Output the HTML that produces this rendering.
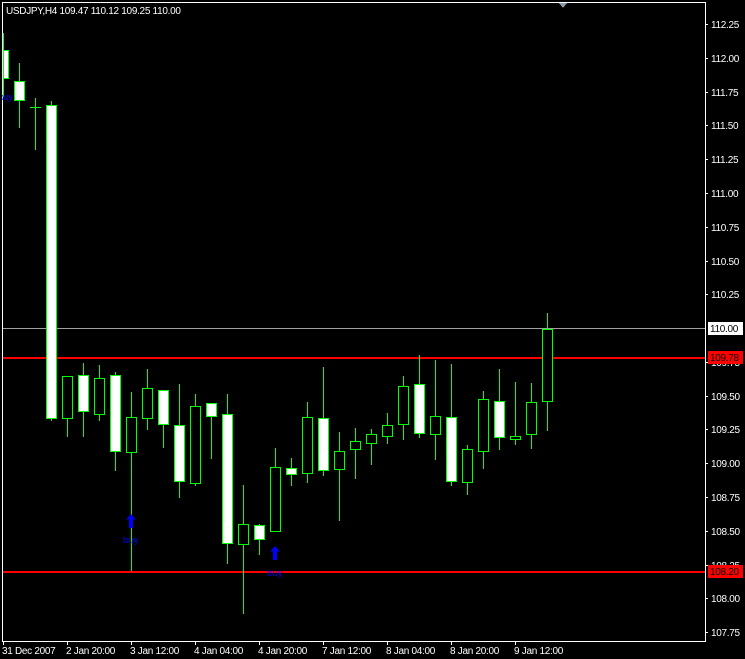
<!DOCTYPE html>
<html><head><meta charset="utf-8"><style>
html,body{margin:0;padding:0;background:#000;}
svg{display:block;}
text{font-family:"Liberation Sans",sans-serif;font-size:10px;fill:#fff;letter-spacing:-0.3px;}
</style></head><body>
<svg width="745" height="659" viewBox="0 0 745 659" xmlns="http://www.w3.org/2000/svg" shape-rendering="crispEdges">
<rect width="745" height="659" fill="#000"/>
<!-- frame -->
<rect x="2" y="2" width="1" height="640" fill="#fff"/>
<rect x="2" y="2" width="704" height="1" fill="#fff"/>
<rect x="705" y="2" width="1" height="640" fill="#fff"/>
<rect x="2" y="641" width="704" height="1" fill="#fff"/>
<polygon points="559,3 567,3 563,8" fill="#8a9aa8"/>
<text x="6" y="14">USDJPY,H4  109.47 110.12 109.25 110.00</text>
<!-- lines -->
<rect x="3" y="328" width="702" height="1" fill="#a0a0a0"/>
<rect x="3" y="357" width="702" height="2" fill="#ff0000"/>
<rect x="3" y="571" width="702" height="2" fill="#ff0000"/>
<!-- price axis -->
<g fill="#fff">
<rect x="705" y="24" width="3" height="1"/><rect x="705" y="58" width="3" height="1"/><rect x="705" y="92" width="3" height="1"/><rect x="705" y="125" width="3" height="1"/><rect x="705" y="159" width="3" height="1"/><rect x="705" y="193" width="3" height="1"/><rect x="705" y="227" width="3" height="1"/><rect x="705" y="261" width="3" height="1"/><rect x="705" y="294" width="3" height="1"/><rect x="705" y="362" width="3" height="1"/><rect x="705" y="396" width="3" height="1"/><rect x="705" y="429" width="3" height="1"/><rect x="705" y="463" width="3" height="1"/><rect x="705" y="497" width="3" height="1"/><rect x="705" y="531" width="3" height="1"/><rect x="705" y="565" width="3" height="1"/><rect x="705" y="598" width="3" height="1"/><rect x="705" y="632" width="3" height="1"/>
</g>
<g>
<text x="711" y="28">112.25</text><text x="711" y="62">112.00</text><text x="711" y="96">111.75</text><text x="711" y="129">111.50</text><text x="711" y="163">111.25</text><text x="711" y="197">111.00</text><text x="711" y="231">110.75</text><text x="711" y="265">110.50</text><text x="711" y="298">110.25</text><text x="711" y="366">109.75</text><text x="711" y="400">109.50</text><text x="711" y="433">109.25</text><text x="711" y="467">109.00</text><text x="711" y="501">108.75</text><text x="711" y="535">108.50</text><text x="711" y="569">108.25</text><text x="711" y="602">108.00</text><text x="711" y="636">107.75</text>
</g>
<rect x="708" y="322" width="35" height="13" fill="#fff"/>
<text x="710" y="332" style="fill:#000">110.00</text>
<rect x="708" y="351" width="35" height="13" fill="#f00"/>
<text x="710" y="361" style="fill:#000">109.78</text>
<rect x="708" y="565" width="35" height="13" fill="#f00"/>
<text x="710" y="575" style="fill:#000">108.20</text>
<!-- time axis -->
<g fill="#fff">
<rect x="3" y="641" width="1" height="4"/><rect x="67" y="641" width="1" height="4"/><rect x="131" y="641" width="1" height="4"/><rect x="195" y="641" width="1" height="4"/><rect x="259" y="641" width="1" height="4"/><rect x="323" y="641" width="1" height="4"/><rect x="387" y="641" width="1" height="4"/><rect x="451" y="641" width="1" height="4"/><rect x="515" y="641" width="1" height="4"/>
</g>
<g>
<text x="2" y="654">31 Dec 2007</text><text x="66" y="654">2 Jan 20:00</text><text x="130" y="654">3 Jan 12:00</text><text x="194" y="654">4 Jan 04:00</text><text x="258" y="654">4 Jan 20:00</text><text x="322" y="654">7 Jan 12:00</text><text x="386" y="654">8 Jan 04:00</text><text x="450" y="654">8 Jan 20:00</text><text x="514" y="654">9 Jan 12:00</text>
</g>
<!-- candles -->
<g stroke="#00ff00" stroke-width="1">
<line x1="3.5" y1="33" x2="3.5" y2="97"/><rect x="3.5" y="50.5" width="5" height="28" fill="#fff"/>
<line x1="19.5" y1="63" x2="19.5" y2="128"/><rect x="14.5" y="81.5" width="10" height="19" fill="#fff"/>
<line x1="35.5" y1="98" x2="35.5" y2="150"/><line x1="30" y1="107.5" x2="41" y2="107.5"/>
<line x1="51.5" y1="101" x2="51.5" y2="421"/><rect x="46.5" y="105.5" width="10" height="313" fill="#fff"/>
</g>
<g stroke="#00ff00" stroke-width="1">
<line x1="67.5" y1="376" x2="67.5" y2="437"/><rect x="62.5" y="376.5" width="10" height="42" fill="#000"/>
<line x1="83.5" y1="363" x2="83.5" y2="437"/><rect x="78.5" y="375.5" width="10" height="36" fill="#fff"/>
<line x1="99.5" y1="365" x2="99.5" y2="421"/><rect x="94.5" y="378.5" width="10" height="36" fill="#000"/>
<line x1="115.5" y1="372" x2="115.5" y2="471"/><rect x="110.5" y="375.5" width="10" height="76" fill="#fff"/>
<line x1="131.5" y1="392" x2="131.5" y2="571"/><rect x="126.5" y="417.5" width="10" height="35" fill="#000"/>
<line x1="147.5" y1="369" x2="147.5" y2="430"/><rect x="142.5" y="388.5" width="10" height="30" fill="#000"/>
<line x1="163.5" y1="390" x2="163.5" y2="448"/><rect x="158.5" y="390.5" width="10" height="34" fill="#fff"/>
<line x1="179.5" y1="384" x2="179.5" y2="498"/><rect x="174.5" y="425.5" width="10" height="56" fill="#fff"/>
<line x1="195.5" y1="394" x2="195.5" y2="486"/><rect x="190.5" y="406.5" width="10" height="77" fill="#000"/>
<line x1="211.5" y1="403" x2="211.5" y2="459"/><rect x="206.5" y="403.5" width="10" height="13" fill="#fff"/>
<line x1="227.5" y1="394" x2="227.5" y2="564"/><rect x="222.5" y="414.5" width="10" height="129" fill="#fff"/>
<line x1="243.5" y1="485" x2="243.5" y2="614"/><rect x="238.5" y="524.5" width="10" height="20" fill="#000"/>
<line x1="259.5" y1="524" x2="259.5" y2="555"/><rect x="254.5" y="525.5" width="10" height="14" fill="#fff"/>
<line x1="275.5" y1="448" x2="275.5" y2="531"/><rect x="270.5" y="467.5" width="10" height="64" fill="#000"/>
<line x1="291.5" y1="458" x2="291.5" y2="486"/><rect x="286.5" y="468.5" width="10" height="6" fill="#fff"/>
<line x1="307.5" y1="402" x2="307.5" y2="483"/><rect x="302.5" y="417.5" width="10" height="56" fill="#000"/>
<line x1="323.5" y1="367" x2="323.5" y2="476"/><rect x="318.5" y="418.5" width="10" height="52" fill="#fff"/>
<line x1="339.5" y1="432" x2="339.5" y2="521"/><rect x="334.5" y="451.5" width="10" height="18" fill="#000"/>
<line x1="355.5" y1="428" x2="355.5" y2="479"/><rect x="350.5" y="441.5" width="10" height="8" fill="#000"/>
<line x1="371.5" y1="429" x2="371.5" y2="465"/><rect x="366.5" y="434.5" width="10" height="9" fill="#000"/>
<line x1="387.5" y1="413" x2="387.5" y2="444"/><rect x="382.5" y="425.5" width="10" height="11" fill="#000"/>
<line x1="403.5" y1="376" x2="403.5" y2="440"/><rect x="398.5" y="386.5" width="10" height="38" fill="#000"/>
<line x1="419.5" y1="355" x2="419.5" y2="438"/><rect x="414.5" y="384.5" width="10" height="49" fill="#fff"/>
<line x1="435.5" y1="360" x2="435.5" y2="460"/><rect x="430.5" y="416.5" width="10" height="18" fill="#000"/>
<line x1="451.5" y1="364" x2="451.5" y2="486"/><rect x="446.5" y="417.5" width="10" height="64" fill="#fff"/>
<line x1="467.5" y1="445" x2="467.5" y2="495"/><rect x="462.5" y="449.5" width="10" height="33" fill="#000"/>
<line x1="483.5" y1="391" x2="483.5" y2="469"/><rect x="478.5" y="399.5" width="10" height="52" fill="#000"/>
<line x1="499.5" y1="369" x2="499.5" y2="450"/><rect x="494.5" y="401.5" width="10" height="36" fill="#fff"/>
<line x1="515.5" y1="382" x2="515.5" y2="445"/><rect x="510.5" y="436.5" width="10" height="3" fill="#000"/>
<line x1="531.5" y1="383" x2="531.5" y2="449"/><rect x="526.5" y="402.5" width="10" height="32" fill="#000"/>
<line x1="547.5" y1="313" x2="547.5" y2="431"/><rect x="542.5" y="329.5" width="10" height="72" fill="#000"/>
</g>
<!-- buy arrows -->
<g fill="#0000ff" shape-rendering="auto">
<polygon points="131,514 136,520 133,519 133,528 129,528 129,519 126,520"/>
<polygon points="275,546 280,552 277,551 277,560 273,560 273,551 270,552"/>
</g>
<text x="123" y="543" style="fill:#0000ff;font-size:9px;letter-spacing:0.5px">buy</text>
<text x="267" y="576" style="fill:#0000ff;font-size:9px;letter-spacing:0.5px">buy</text>
<text x="-1" y="100" style="fill:#0000ff;font-size:9px">buy</text>
<rect x="0" y="0" width="2" height="659" fill="#000"/>
</svg>
</body></html>
